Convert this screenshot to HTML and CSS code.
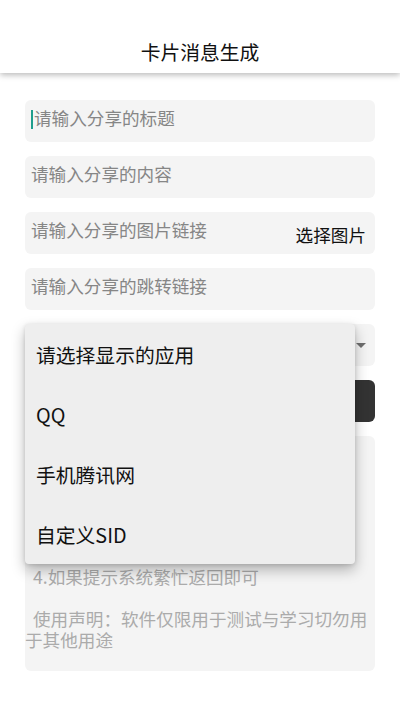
FILE: index.html
```html
<!DOCTYPE html>
<html lang="zh-CN">
<head>
  <meta charset="UTF-8">
  <title>卡片消息生成</title>
  <link rel="stylesheet" href="styles.css">
</head>
<body>
  <header class="appbar">
    <h1>卡片消息生成</h1>
  </header>

  <main class="form">
    <div class="field"><span class="cursor"></span><span class="hint">请输入分享的标题</span></div>
    <div class="field"><span class="hint">请输入分享的内容</span></div>
    <div class="field">
      <span class="hint">请输入分享的图片链接</span>
      <span class="pick">选择图片</span>
    </div>
    <div class="field"><span class="hint">请输入分享的跳转链接</span></div>

    <!-- spinner with its dropdown open -->
    <div class="spinner-wrap">
      <div class="field spinner">
        <span class="arrow"></span>
      </div>
      <ul class="dropdown">
        <li>请选择显示的应用</li>
        <li>QQ</li>
        <li>手机腾讯网</li>
        <li>自定义SID</li>
      </ul>
    </div>

    <button class="submit"></button>

    <!-- upper lines sit under the dropdown -->
    <div class="info">
      <p>4.如果提示系统繁忙返回即可</p>
      <p class="blank"></p>
      <p>使用声明：软件仅限用于测试与学习切勿用于其他用途</p>
    </div>
  </main>
</body>
</html>
```

FILE: styles.css
```css
body {
  margin: 0;
  background: #fff;
  font-family: "Noto Sans CJK SC", "Noto Sans", sans-serif;
}
.appbar {
  position: relative;
  z-index: 1;
  height: 73px;
  padding-top: 29px;
  box-sizing: border-box;
  display: flex;
  align-items: center;
  justify-content: center;
  background: #fff;
  box-shadow: 0 2px 6px rgba(0, 0, 0, 0.28);
}
.appbar h1 {
  margin: 0;
  font-size: 19.8px;
  font-weight: 400;
  color: #111;
}
.form {
  padding: 27px 25px 40px;
  display: flex;
  flex-direction: column;
  gap: 14px;
}
.field {
  height: 42px;
  box-sizing: border-box;
  padding: 6px 6px 0;
  background: #f4f4f4;
  border-radius: 6px;
  display: flex;
  align-items: flex-start;
  font-size: 17.6px;
  line-height: 24px;
}
.hint {
  color: #868686;
}
.cursor {
  display: inline-block;
  width: 2px;
  height: 19px;
  margin: 4px 1px 0 0;
  background: #1f9e8c;
}
.pick {
  margin-left: auto;
  margin-top: 5px;
  margin-right: 3px;
  color: #111;
}
.spinner-wrap {
  position: relative;
}
.spinner {
  align-items: center;
  padding-top: 0;
}
.arrow {
  margin-left: auto;
  margin-right: 3px;
  width: 0;
  height: 0;
  border-left: 5px solid transparent;
  border-right: 5px solid transparent;
  border-top: 5px solid #6e6e6e;
}
.dropdown {
  position: absolute;
  top: 0;
  left: 0;
  z-index: 2;
  width: 330px;
  margin: 0;
  padding: 0;
  list-style: none;
  background: #eeeeee;
  border-radius: 4px;
  box-shadow: 0 6px 14px rgba(0, 0, 0, 0.28), 0 1px 4px rgba(0, 0, 0, 0.12);
}
.dropdown li {
  height: 60px;
  padding-left: 11px;
  display: flex;
  align-items: center;
  font-size: 19.8px;
  color: #111;
}
.submit {
  height: 42px;
  border: none;
  border-radius: 6px;
  background: #333;
}
.info {
  height: 235px;
  box-sizing: border-box;
  padding: 130px 0 0;
  background: #f4f4f4;
  border-radius: 6px;
  color: #ababab;
  font-size: 17.6px;
  line-height: 21px;
}
.info p {
  margin: 0;
  text-indent: 8px;
}
.info .blank {
  height: 21px;
}
```
